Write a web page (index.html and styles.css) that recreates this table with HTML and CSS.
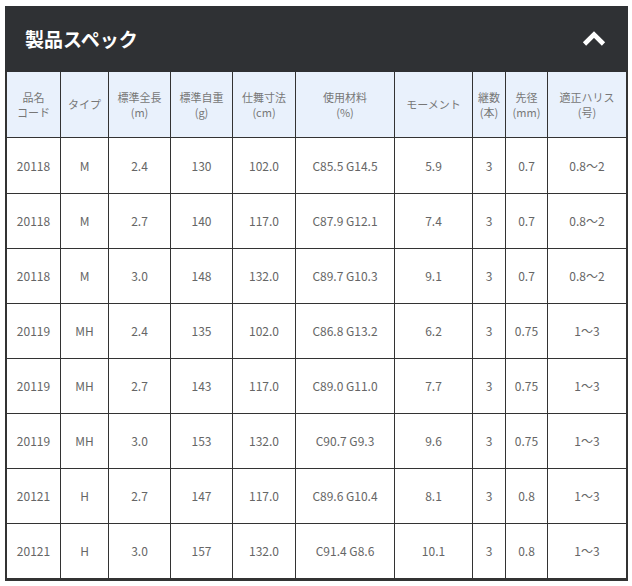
FILE: index.html
```html
<!DOCTYPE html>
<html lang="ja">
<head>
<meta charset="utf-8">
<title>製品スペック</title>
<link rel="stylesheet" href="styles.css">
</head>
<body>
<section class="spec">
  <header class="spec-head">
    <h2 class="spec-title">製品スペック</h2>
    <span class="spec-toggle" aria-label="閉じる">
      <svg width="24" height="16" viewBox="0 0 24 16"><polyline points="2.5,14 12,4.5 21.5,14" fill="none" stroke="#fff" stroke-width="4.6" stroke-linejoin="miter"/></svg>
    </span>
  </header>
  <table class="spec-table">
    <colgroup>
      <col class="c1"><col class="c2"><col class="c3"><col class="c4"><col class="c5">
      <col class="c6"><col class="c7"><col class="c8"><col class="c9"><col class="c10">
    </colgroup>
    <thead>
      <tr>
        <th>品名<br>コード</th>
        <th>タイプ</th>
        <th>標準全長<br>(m)</th>
        <th>標準自重<br>(g)</th>
        <th>仕舞寸法<br>(cm)</th>
        <th>使用材料<br>(%)</th>
        <th>モーメント</th>
        <th>継数<br>(本)</th>
        <th>先径<br>(mm)</th>
        <th>適正ハリス<br>(号)</th>
      </tr>
    </thead>
    <tbody>
      <tr><td>20118</td><td>M</td><td>2.4</td><td>130</td><td>102.0</td><td>C85.5 G14.5</td><td>5.9</td><td>3</td><td>0.7</td><td>0.8〜2</td></tr>
      <tr><td>20118</td><td>M</td><td>2.7</td><td>140</td><td>117.0</td><td>C87.9 G12.1</td><td>7.4</td><td>3</td><td>0.7</td><td>0.8〜2</td></tr>
      <tr><td>20118</td><td>M</td><td>3.0</td><td>148</td><td>132.0</td><td>C89.7 G10.3</td><td>9.1</td><td>3</td><td>0.7</td><td>0.8〜2</td></tr>
      <tr><td>20119</td><td>MH</td><td>2.4</td><td>135</td><td>102.0</td><td>C86.8 G13.2</td><td>6.2</td><td>3</td><td>0.75</td><td>1〜3</td></tr>
      <tr><td>20119</td><td>MH</td><td>2.7</td><td>143</td><td>117.0</td><td>C89.0 G11.0</td><td>7.7</td><td>3</td><td>0.75</td><td>1〜3</td></tr>
      <tr><td>20119</td><td>MH</td><td>3.0</td><td>153</td><td>132.0</td><td>C90.7 G9.3</td><td>9.6</td><td>3</td><td>0.75</td><td>1〜3</td></tr>
      <tr><td>20121</td><td>H</td><td>2.7</td><td>147</td><td>117.0</td><td>C89.6 G10.4</td><td>8.1</td><td>3</td><td>0.8</td><td>1〜3</td></tr>
      <tr><td>20121</td><td>H</td><td>3.0</td><td>157</td><td>132.0</td><td>C91.4 G8.6</td><td>10.1</td><td>3</td><td>0.8</td><td>1〜3</td></tr>
    </tbody>
  </table>
</section>
</body>
</html>
```
FILE: styles.css
```css
html, body {
  margin: 0;
  padding: 0;
  background: #fff;
}
body {
  font-family: "Noto Sans CJK JP", "Noto Sans", sans-serif;
}
.spec {
  width: 619px;
  margin: 6px 0 0 5px;
  border-left: 2px solid #333;
  border-right: 2px solid #333;
  border-bottom: 3px solid #333;
}
.spec-head {
  height: 66px;
  margin: 0 -2px;
  background: #2f3134;
  display: flex;
  align-items: center;
  justify-content: space-between;
  padding: 0 22px 0 20px;
}
.spec-title {
  margin: 0;
  color: #fff;
  font-size: 19px;
  font-weight: 700;
  letter-spacing: 0;
  line-height: 1;
  padding-bottom: 2px;
}
.spec-toggle {
  display: flex;
  width: 24px;
  height: 16px;
  margin-top: -2px;
}
.spec-table {
  width: 619px;
  table-layout: fixed;
  border-collapse: separate;
  border-spacing: 0;
}
.c1 { width: 54px; }
.c2 { width: 48px; }
.c3 { width: 62px; }
.c4 { width: 62px; }
.c5 { width: 63px; }
.c6 { width: 99px; }
.c7 { width: 78px; }
.c8 { width: 33px; }
.c9 { width: 42px; }
.c10 { width: 78px; }
.spec-table th,
.spec-table td {
  padding: 0;
  text-align: center;
  vertical-align: middle;
  border-right: 1px solid #333;
  border-bottom: 1px solid #333;
  box-sizing: border-box;
}
.spec-table th:last-child,
.spec-table td:last-child {
  border-right: none;
}
.spec-table th {
  background: #e9f1fc;
  color: #777;
  font-size: 11px;
  font-weight: 400;
  line-height: 15px;
}
.spec-table thead tr {
  height: 66px;
}
.spec-table td {
  color: #666;
  font-size: 12px;
  line-height: 16px;
}
.spec-table tbody tr {
  height: 55px;
}
.spec-table tbody tr:first-child {
  height: 56px;
}
.spec-table tbody tr:last-child {
  height: 54px;
}
.spec-table tbody tr:last-child td {
  border-bottom: none;
}
```
